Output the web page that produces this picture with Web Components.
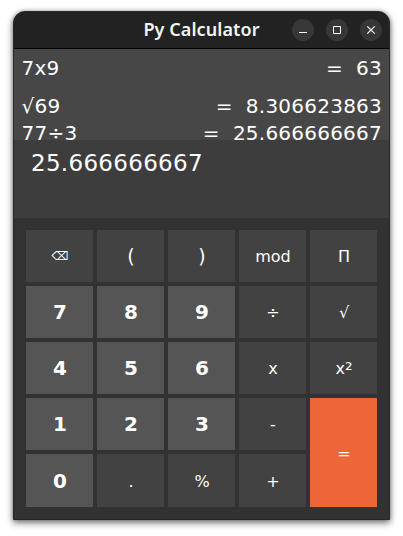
<!DOCTYPE html>
<html lang="en">
<head>
<meta charset="utf-8">
<title>Py Calculator</title>
<style>
html,body{margin:0;height:100%;background:#fff}
body{overflow:hidden;font-family:"DejaVu Sans",sans-serif;color:#fff}
</style>
</head>
<body>
<calc-window></calc-window>
<script>
const define = (name, html, setup) => customElements.define(name, class extends HTMLElement {
  constructor() {
    super();
    const t = document.createElement('template');
    t.innerHTML = html;
    this.attachShadow({mode: 'open'}).append(t.content.cloneNode(true));
  }
  connectedCallback() { if (setup) setup(this); }
});

define('title-bar', `<style>
:host{display:grid;grid-template-columns:1fr auto 1fr;align-items:center;height:36px;background:#222;border-bottom:1px solid #000}
h1{grid-column:2;margin:0;font:600 18px/34px "Noto Sans",sans-serif;letter-spacing:.08px;height:36px;color:#f4f4f4;white-space:nowrap}
.controls{display:flex;gap:12px;justify-self:end;padding-right:7px}
.controls svg{display:block;width:22px;height:22px}
circle{fill:#373737}
path{fill:none;stroke:#fff;stroke-width:1}
</style>
<h1><slot></slot></h1>
<div class="controls">
<svg viewBox="0 0 22 22"><circle cx="11" cy="11" r="11"/><path d="M7 13.5h8"/></svg>
<svg viewBox="0 0 22 22"><circle cx="11" cy="11" r="11"/><path d="M7.5 7.5h7v7h-7z"/></svg>
<svg viewBox="0 0 22 22"><circle cx="11" cy="11" r="11"/><path d="M7.3 7.3l7.4 7.4M14.7 7.3l-7.4 7.4" style="stroke-width:1.2"/></svg>
</div>`);

define('history-row', `<style>
:host{display:flex;justify-content:space-between;height:27px;line-height:27px;font-size:20px;letter-spacing:.23px;white-space:pre}
</style><slot name="expression"></slot><slot name="result"></slot>`);

define('calc-history', `<style>
:host{display:block;height:91px;box-sizing:border-box;padding:6px 7px 0 7.5px;background:#474747}
</style><slot></slot>`);

define('calc-display', `<style>
:host{display:block;height:78px;box-sizing:border-box;padding:9px 17px 0;background:#3d3d3d;font-size:23px;line-height:28px;letter-spacing:.3px}
</style><slot></slot>`);

define('calc-key', `<style>
:host{display:block}
button{display:flex;align-items:center;justify-content:center;box-sizing:border-box;width:100%;height:100%;margin:0;border:0;padding:2px 0 0 1px;background:#424242;color:#fff;font:16px/20px "DejaVu Sans",sans-serif}
:host([kind=digit]) button{background:#555;font-size:20px;font-weight:bold;padding-top:0}
:host([kind=paren]) button{font-size:19px;padding-top:0}
:host([kind=erase]) button{font-size:12px;padding-top:0}
:host([kind=equals]){grid-row:span 2}
:host([kind=equals]) button{background:#ec6637}
::slotted(span){font-size:19px}
</style><button><slot></slot></button>`);

define('calc-keypad', `<style>
:host{display:grid;grid-template-columns:repeat(5,67px);grid-template-rows:repeat(4,52px) 53px;gap:4px;padding:12px;background:#323232}
</style>`, el => {
  const keys = [['⌫','erase'],['(','paren'],[')','paren'],['mod'],['Π'],
    ['7','digit'],['8','digit'],['9','digit'],['÷'],['√'],
    ['4','digit'],['5','digit'],['6','digit'],['x'],['x<span>²</span>'],
    ['1','digit'],['2','digit'],['3','digit'],['-'],['=','equals'],
    ['0','digit'],['.'],['%'],['+']];
  for (const [label, kind] of keys) {
    const k = document.createElement('calc-key');
    if (kind) k.setAttribute('kind', kind);
    k.innerHTML = label;
    el.shadowRoot.append(k);
  }
});

define('calc-window', `<style>
:host{display:block;box-sizing:border-box;width:377px;height:509px;margin:11px 13px 16px;border:1px solid #262626;border-radius:12px 12px 0 0;overflow:hidden;background:#323232;box-shadow:0 3px 7px rgba(0,0,0,.5),0 0 4px rgba(0,0,0,.3)}
history-row:first-child{margin-bottom:11px}
</style>
<title-bar>Py Calculator</title-bar>
<calc-history>
<history-row><span slot="expression">7x9</span><span slot="result">=  63</span></history-row>
<history-row><span slot="expression">√69</span><span slot="result">=  8.306623863</span></history-row>
<history-row><span slot="expression">77÷3</span><span slot="result">=  25.666666667</span></history-row>
</calc-history>
<calc-display>25.666666667</calc-display>
<calc-keypad></calc-keypad>`);
</script>
</body>
</html>
